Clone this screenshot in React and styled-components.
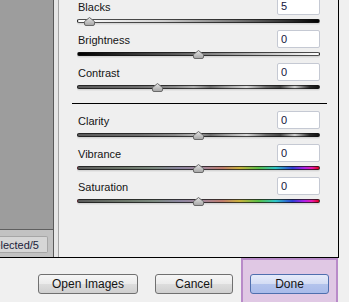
import React from 'react';
import styled, { createGlobalStyle } from 'styled-components';

const Global = createGlobalStyle`
  html, body {
    margin: 0;
    padding: 0;
    overflow: hidden;
    background: #f0f0f0;
    font-family: "Liberation Sans", Arial, sans-serif;
    font-size: 11px;
    color: #1a1a1a;
  }
`;

const Window = styled.div`
  width: 349px;
  height: 302px;
  overflow: hidden;
  background: #f0f0f0;
`;

const Top = styled.div`
  display: flex;
  width: 339px;
  height: 258px;
  box-sizing: border-box;
  border-right: 1px solid #000;
  border-bottom: 1px solid #000;
`;

const Sidebar = styled.div`
  width: 54px;
  box-sizing: border-box;
  border-right: 1px solid #5a5a5a;
  display: flex;
  flex-direction: column;
`;

const Thumbs = styled.div`
  flex: 1;
  background: #9d9d9d;
`;

const SideFooter = styled.div`
  height: 28px;
  box-sizing: border-box;
  border-top: 1px solid #5f5f5f;
  background: #c2c2c2;
  padding-top: 6px;
`;

const CountBox = styled.div`
  width: 48px;
  height: 17px;
  box-sizing: border-box;
  border: 1px solid #a6a6a6;
  border-left: none;
  border-radius: 0 2px 2px 0;
  background: #d6d6d6;
  display: flex;
  justify-content: flex-end;
  align-items: center;
  overflow: hidden;
  white-space: nowrap;
  padding-right: 8px;
  color: #1c1c3a;
`;

const Gutter = styled.div`
  width: 5px;
  box-sizing: border-box;
  background: #e6e6e6;
  border-right: 1px solid #a3a3a3;
`;

const Panel = styled.div`
  flex: 1;
  background: #efefef;
  padding: 0 11px 0 13px;
  overflow: hidden;
`;

const Content = styled.div`
  margin-top: -3px;
`;

const Row = styled.div`
  height: 33px;
  padding: 0 7px 0 5px;
`;

const Head = styled.div`
  display: flex;
  justify-content: space-between;
  align-items: flex-start;
  height: 18px;
`;

const Label = styled.span`
  line-height: 13px;
  padding-top: 4px;
  padding-left: 1px;
  color: #141414;
`;

const Value = styled.input`
  width: 43px;
  height: 18px;
  box-sizing: border-box;
  border: 1px solid #c5c9d3;
  border-radius: 2px;
  background: #fff;
  padding: 0 0 0 3px;
  margin: 0;
  font-family: "Liberation Sans", Arial, sans-serif;
  font-size: 11px;
  color: #14143c;
  outline: none;
`;

const Track = styled.div`
  position: relative;
  margin-top: 4px;
  height: 4px;
  box-sizing: border-box;
  border: 1px solid rgba(20, 20, 20, 0.75);
  border-radius: 2px;
  background: ${p => p.$fill};
  box-shadow: 0 1px 0 #d6d6d6, 0 2px 0 #e4e4e4;
`;

const Thumb = styled.svg`
  position: absolute;
  top: -3px;
  width: 11px;
  height: 9px;
  margin-left: -6px;
`;

const Divider = styled.div`
  height: 1px;
  background: #000;
  margin: 7px 0;
`;

const Bottom = styled.div`
  display: flex;
  align-items: flex-start;
  padding-left: 38px;
  height: 44px;
`;

const Button = styled.div`
  width: ${p => p.$w}px;
  height: 20px;
  margin-top: ${p => (p.$inset ? 0 : 16)}px;
  margin-left: ${p => p.$gap || 0}px;
  box-sizing: border-box;
  border: 1px solid ${p => (p.$primary ? '#4f6fae' : '#707070')};
  border-radius: 3px;
  background: ${p => p.$primary
    ? 'linear-gradient(#e6ebfa 0%, #d3dcf4 50%, #b3c3ec 52%, #a9bbea 100%)'
    : 'linear-gradient(#f6f6f6 0%, #ebebeb 50%, #dddddd 52%, #cfcfcf 100%)'};
  display: flex;
  align-items: center;
  justify-content: center;
  font-size: 12px;
  color: #141414;
`;

const Focus = styled.div`
  margin-left: 8px;
  width: 97px;
  height: 48px;
  box-sizing: border-box;
  border: 2px solid #b98bc9;
  background: #e0c8e4;
  padding: 14px 0 0 7px;
`;

const greys = 'linear-gradient(to right, #5a5a5a 0%, #6e6e6e 25%, #8a8a8a 40%, #b0b0b0 48%, #6a6a6a 55%, #a8a8a8 63%, #d8d8d8 70%, #6a6a6a 78%, #444 84%, #cfcfcf 90%, #2a2a2a 96%, #111 100%)';
const colours = 'linear-gradient(to right, #5c5c5c 0%, #6f7a6d 20%, #7c8a80 32%, #8c86a0 42%, #a4869a 52%, #c07c6c 60%, #c9b23c 67%, #58c048 75%, #2ec6c8 82%, #2f3ed6 89%, #b020e8 94%, #e81ab0 97%, #e00018 100%)';

const sliders = [
  { name: 'Blacks', value: 5, pos: 0.05, fill: 'linear-gradient(to right, #ffffff 0%, #d0d0d0 35%, #7a7a7a 65%, #000 100%)' },
  { name: 'Brightness', value: 0, pos: 0.5, fill: 'linear-gradient(to right, #000 0%, #5a5a5a 40%, #bdbdbd 75%, #fff 100%)' },
  { name: 'Contrast', value: 0, pos: 1 / 3, fill: greys },
  'divider',
  { name: 'Clarity', value: 0, pos: 0.5, fill: greys },
  { name: 'Vibrance', value: 0, pos: 0.5, fill: colours },
  { name: 'Saturation', value: 0, pos: 0.5, fill: colours },
];

const Knob = ({ pos }) => (
  <Thumb viewBox="0 0 11 9" style={{ left: `${pos * 100}%` }}>
    <defs>
      <linearGradient id="knob" x1="0" y1="0" x2="0" y2="1">
        <stop offset="0" stopColor="#e4e4e4" />
        <stop offset="1" stopColor="#a4a4a4" />
      </linearGradient>
    </defs>
    <path d="M5.5 0.5 L10.5 4.5 L10.5 7 Q10.5 8.5 9 8.5 L2 8.5 Q0.5 8.5 0.5 7 L0.5 4.5 Z" fill="url(#knob)" stroke="#6a6a6a" strokeWidth="1" />
  </Thumb>
);

const App = () => (
  <Window>
    <Global />
    <Top>
      <Sidebar>
        <Thumbs />
        <SideFooter>
          <CountBox>1 selected/5</CountBox>
        </SideFooter>
      </Sidebar>
      <Gutter />
      <Panel>
        <Content>
          {sliders.map((s, i) => s === 'divider' ? (
            <Divider key={i} />
          ) : (
            <Row key={s.name}>
              <Head>
                <Label>{s.name}</Label>
                <Value readOnly value={s.value} />
              </Head>
              <Track $fill={s.fill}>
                <Knob pos={s.pos} />
              </Track>
            </Row>
          ))}
        </Content>
      </Panel>
    </Top>
    <Bottom>
      <Button $w={100}>Open Images</Button>
      <Button $w={78} $gap={17}>Cancel</Button>
      <Focus>
        <Button $w={79} $inset $primary>Done</Button>
      </Focus>
    </Bottom>
  </Window>
);

export default App;
